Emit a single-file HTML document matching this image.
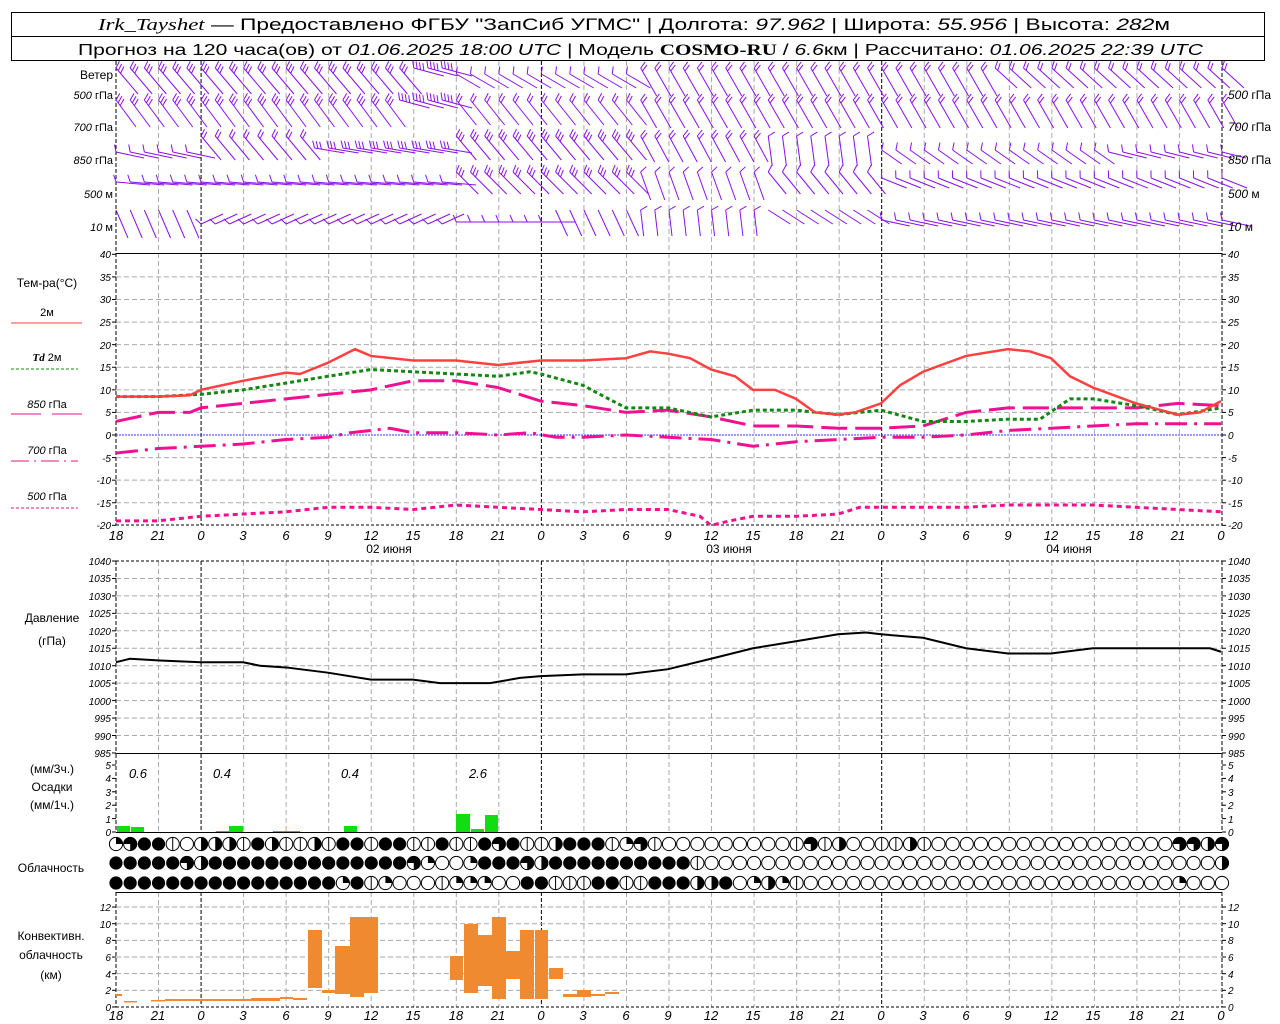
<!DOCTYPE html>
<html><head><meta charset="utf-8"><style>
html,body{margin:0;padding:0;background:#fff;width:1280px;height:1024px;overflow:hidden}
svg{display:block}
text{font-family:"Liberation Sans","DejaVu Sans",sans-serif;fill:#000}
.t{font-size:12px}
.ax{font-size:10px;font-style:italic}
.tk{font-size:13px;font-style:italic}
</style></head><body>
<svg id="s" width="1280" height="1024" xmlns="http://www.w3.org/2000/svg">
<rect x="11.5" y="12.5" width="1253" height="48" fill="#fff" stroke="#000"/>
<line x1="11" y1="36.5" x2="1265" y2="36.5" stroke="#000"/>
<text x="98" y="30" font-size="17" textLength="1072" lengthAdjust="spacingAndGlyphs"><tspan font-family="Liberation Serif" font-style="italic">Irk_Tayshet</tspan> — Предоставлено ФГБУ "ЗапСиб УГМС" | Долгота: <tspan font-style="italic">97.962</tspan> | Широта: <tspan font-style="italic">55.956</tspan> | Высота: <tspan font-style="italic">282</tspan>м</text>
<text x="78" y="55" font-size="16" textLength="1125" lengthAdjust="spacingAndGlyphs">Прогноз на 120 часа(ов) от <tspan font-style="italic">01.06.2025 18:00 UTC</tspan> | Модель <tspan font-family="Liberation Serif" font-weight="bold">COSMO-RU</tspan> / <tspan font-style="italic">6.6</tspan>км | Рассчитано: <tspan font-style="italic">01.06.2025 22:39 UTC</tspan></text>
<g id="g"></g>
<g class="t" text-anchor="end">
<text x="113" y="79">Ветер</text>
<text x="113" y="99" font-size="11"><tspan font-style="italic">500</tspan> гПа</text>
<text x="113" y="131" font-size="11"><tspan font-style="italic">700</tspan> гПа</text>
<text x="113" y="164" font-size="11"><tspan font-style="italic">850</tspan> гПа</text>
<text x="113" y="198" font-size="11"><tspan font-style="italic">500</tspan> м</text>
<text x="113" y="231" font-size="11"><tspan font-style="italic">10</tspan>   м</text>
</g>
<g class="t" font-size="11">
<text x="1228" y="99"><tspan font-style="italic">500</tspan> гПа</text>
<text x="1228" y="131"><tspan font-style="italic">700</tspan> гПа</text>
<text x="1228" y="164"><tspan font-style="italic">850</tspan> гПа</text>
<text x="1228" y="198"><tspan font-style="italic">500</tspan> м</text>
<text x="1228" y="231"><tspan font-style="italic">10</tspan>   м</text>
</g>
<g class="t" text-anchor="middle">
<text x="47" y="287">Тем-ра(°С)</text>
<text x="47" y="316" font-size="11">2м</text>
<text x="47" y="361" font-size="11"><tspan font-family="Liberation Serif" font-weight="bold" font-style="italic">Td</tspan>  2м</text>
<text x="47" y="408" font-size="11"><tspan font-style="italic">850</tspan>  гПа</text>
<text x="47" y="454" font-size="11"><tspan font-style="italic">700</tspan>  гПа</text>
<text x="47" y="500" font-size="11"><tspan font-style="italic">500</tspan>  гПа</text>
<text x="52" y="622">Давление</text>
<text x="52" y="645">(гПа)</text>
<text x="52" y="773">(мм/3ч.)</text>
<text x="52" y="791">Осадки</text>
<text x="52" y="809">(мм/1ч.)</text>
<text x="51" y="872">Облачность</text>
<text x="51" y="940">Конвективн.</text>
<text x="51" y="959">облачность</text>
<text x="51" y="979">(км)</text>
</g>
<line x1="11" y1="323" x2="82" y2="323" stroke="#ff4040" stroke-width="1"/>
<line x1="11" y1="369" x2="78" y2="369" stroke="#118811" stroke-dasharray="3,2"/>
<line x1="11" y1="414" x2="41" y2="414" stroke="#e8108a"/><line x1="52" y1="414" x2="82" y2="414" stroke="#e8108a"/>
<line x1="11" y1="461" x2="78" y2="461" stroke="#e8108a" stroke-dasharray="18,5,2,5"/>
<line x1="11" y1="508" x2="78" y2="508" stroke="#e8108a" stroke-dasharray="3,2"/>
<g class="ax" text-anchor="end">
<text x="111" y="258">40</text><text x="111" y="281">35</text><text x="111" y="303">30</text><text x="111" y="326">25</text><text x="111" y="349">20</text><text x="111" y="371">15</text><text x="111" y="394">10</text><text x="111" y="416">5</text><text x="111" y="439">0</text><text x="111" y="462">-5</text><text x="111" y="484">-10</text><text x="111" y="507">-15</text><text x="111" y="529">-20</text>
<text x="111" y="565">1040</text><text x="111" y="582">1035</text><text x="111" y="600">1030</text><text x="111" y="617">1025</text><text x="111" y="635">1020</text><text x="111" y="652">1015</text><text x="111" y="670">1010</text><text x="111" y="687">1005</text><text x="111" y="705">1000</text><text x="111" y="722">995</text><text x="111" y="740">990</text><text x="111" y="757">985</text>
<text x="111" y="769">5</text><text x="111" y="782">4</text><text x="111" y="796">3</text><text x="111" y="809">2</text><text x="111" y="823">1</text><text x="111" y="836">0</text>
<text x="111" y="911">12</text><text x="111" y="928">10</text><text x="111" y="944">8</text><text x="111" y="961">6</text><text x="111" y="978">4</text><text x="111" y="994">2</text><text x="111" y="1011">0</text>
</g>
<g class="ax">
<text x="1228" y="258">40</text><text x="1228" y="281">35</text><text x="1228" y="303">30</text><text x="1228" y="326">25</text><text x="1228" y="349">20</text><text x="1228" y="371">15</text><text x="1228" y="394">10</text><text x="1228" y="416">5</text><text x="1228" y="439">0</text><text x="1228" y="462">-5</text><text x="1228" y="484">-10</text><text x="1228" y="507">-15</text><text x="1228" y="529">-20</text>
<text x="1228" y="565">1040</text><text x="1228" y="582">1035</text><text x="1228" y="600">1030</text><text x="1228" y="617">1025</text><text x="1228" y="635">1020</text><text x="1228" y="652">1015</text><text x="1228" y="670">1010</text><text x="1228" y="687">1005</text><text x="1228" y="705">1000</text><text x="1228" y="722">995</text><text x="1228" y="740">990</text><text x="1228" y="757">985</text>
<text x="1228" y="769">5</text><text x="1228" y="782">4</text><text x="1228" y="796">3</text><text x="1228" y="809">2</text><text x="1228" y="823">1</text><text x="1228" y="836">0</text>
<text x="1228" y="911">12</text><text x="1228" y="928">10</text><text x="1228" y="944">8</text><text x="1228" y="961">6</text><text x="1228" y="978">4</text><text x="1228" y="994">2</text><text x="1228" y="1011">0</text>
</g>
<g class="tk" text-anchor="middle">
<text x="116" y="540">18</text><text x="158" y="540">21</text><text x="201" y="540">0</text><text x="243" y="540">3</text><text x="286" y="540">6</text><text x="328" y="540">9</text><text x="371" y="540">12</text><text x="413" y="540">15</text><text x="456" y="540">18</text><text x="498" y="540">21</text><text x="541" y="540">0</text><text x="583" y="540">3</text><text x="626" y="540">6</text><text x="668" y="540">9</text><text x="711" y="540">12</text><text x="753" y="540">15</text><text x="796" y="540">18</text><text x="838" y="540">21</text><text x="881" y="540">0</text><text x="923" y="540">3</text><text x="966" y="540">6</text><text x="1008" y="540">9</text><text x="1051" y="540">12</text><text x="1093" y="540">15</text><text x="1136" y="540">18</text><text x="1178" y="540">21</text><text x="1221" y="540">0</text>
<text x="116" y="1020">18</text><text x="158" y="1020">21</text><text x="201" y="1020">0</text><text x="243" y="1020">3</text><text x="286" y="1020">6</text><text x="328" y="1020">9</text><text x="371" y="1020">12</text><text x="413" y="1020">15</text><text x="456" y="1020">18</text><text x="498" y="1020">21</text><text x="541" y="1020">0</text><text x="583" y="1020">3</text><text x="626" y="1020">6</text><text x="668" y="1020">9</text><text x="711" y="1020">12</text><text x="753" y="1020">15</text><text x="796" y="1020">18</text><text x="838" y="1020">21</text><text x="881" y="1020">0</text><text x="923" y="1020">3</text><text x="966" y="1020">6</text><text x="1008" y="1020">9</text><text x="1051" y="1020">12</text><text x="1093" y="1020">15</text><text x="1136" y="1020">18</text><text x="1178" y="1020">21</text><text x="1221" y="1020">0</text>
</g>
<g class="t" text-anchor="middle" font-size="12">
<text x="389" y="553">02 июня</text><text x="729" y="553">03 июня</text><text x="1069" y="553">04 июня</text>
</g>
<g class="tk" text-anchor="middle">
<text x="138" y="778">0.6</text><text x="222" y="778">0.4</text><text x="350" y="778">0.4</text><text x="478" y="778">2.6</text>
</g>
</svg>
<script>
(function(){
var g=document.getElementById("g"),h="";
function X(i){return 116+i*1106/78;}
function L(x1,y1,x2,y2,st){h+='<line x1="'+x1+'" y1="'+y1+'" x2="'+x2+'" y2="'+y2+'" '+st+'/>';}
function R(x,y,w,hh,f){h+='<rect x="'+x+'" y="'+y+'" width="'+w+'" height="'+hh+'" fill="'+f+'"/>';}
var gd='stroke="#aaa" stroke-dasharray="5,3"';
var segs=[[61,253],[253,525],[561,754],[754,832],[892,1007]];
for(var k=0;k<=26;k++){var x=116+k*1106/26;var mid=(k%8==2)||k==0||k==26;
 segs.forEach(function(s){L(x,s[0],x,s[1],mid?'stroke="#000" stroke-dasharray="4,2"':gd);});}
for(var t=35;t>-20;t-=5){if(t==0)continue;var y=435-t*4.517;L(116,y,1222,y,gd);}
L(116,435,1222,435,'stroke="#33f" stroke-dasharray="2,1"');
L(116,525,1222,525,'stroke="#000" stroke-dasharray="3,2"');
for(var p=1;p<11;p++){var y=561+p*17.45;L(116,y,1222,y,gd);}
L(116,561,1222,561,'stroke="#000" stroke-dasharray="3,2"');
for(var c=2;c<=12;c+=2){var y=1007-c*8.33;L(116,y,1222,y,gd);}
L(116,1007,1222,1007,'stroke="#000" stroke-dasharray="3,2"');
L(116,253.5,1222,253.5,'stroke="#000"');L(116,753.5,1222,753.5,'stroke="#000"');
L(116,832.5,1222,832.5,'stroke="#000"');L(116,892.5,1222,892.5,'stroke="#000"');
function ticks(y){L(112,y,116,y,'stroke="#000"');L(1222,y,1226,y,'stroke="#000"');}
for(var t=40;t>=-20;t-=5)ticks(435-t*4.517);
for(var p=0;p<12;p++)ticks(561+p*17.45);
for(var v=0;v<=5;v++)ticks(832-v*13.4);
for(var c=0;c<=12;c+=2)ticks(1007-c*8.33);
function poly(d,f,st){var s="";for(var i=0;i<d.length;i+=2)s+=d[i]+","+f(d[i+1])+" ";h+='<polyline points="'+s+'" fill="none" '+st+'/>';}
var ty=function(v){return 435-v*4.517;};
poly([116,-19,158,-19,201,-18,243,-17.5,286,-17,328,-16,371,-16,413,-16.5,456,-15.5,498,-16,541,-16.5,583,-17,626,-16.5,668,-16.5,700,-18,711,-20,730,-19,753,-18,796,-18,838,-17.5,860,-16,881,-16,923,-16,966,-16,1008,-15.5,1051,-15.5,1093,-15.5,1136,-16,1178,-16.5,1221,-17],ty,'stroke="#f01090" stroke-width="3" stroke-dasharray="5,4"');
poly([116,-4,158,-3,201,-2.5,243,-2,286,-1,328,-0.5,350,0.5,371,1,390,1.5,413,0.5,456,0.5,498,0,530,0.5,556,-0.5,583,-0.5,626,0,668,-0.5,711,-1,753,-2.5,796,-1.5,838,-1,881,-0.5,923,-0.5,966,0,1008,1,1051,1.5,1093,2,1136,2.5,1178,2.5,1221,2.5],ty,'stroke="#f01090" stroke-width="3" stroke-dasharray="22,7,3,7"');
poly([116,3,158,5,190,5,201,6,243,7,286,8,328,9,371,10,413,12,456,12,498,10.5,541,7.5,583,6.5,626,5,668,5.5,711,4,753,2,796,2,838,1.5,881,1.5,923,2,966,5,1008,6,1051,6,1093,6,1136,6,1178,7,1221,6.5],ty,'stroke="#f01090" stroke-width="3" stroke-dasharray="26,8"');
poly([116,8.5,158,8.5,201,9,243,10,286,11.5,328,13,371,14.5,413,14,456,13.5,498,13,530,14,541,13.5,583,11,600,9,626,6,668,6,711,4,753,5.5,796,5.5,838,4.5,881,5.5,923,3,966,3,1008,3.5,1040,3.5,1070,8,1093,8,1136,6.5,1178,4.5,1221,6],ty,'stroke="#118811" stroke-width="3" stroke-dasharray="4,3"');
poly([116,8.5,158,8.5,190,8.8,201,10,243,12,286,13.8,300,13.5,328,16,355,19,371,17.5,413,16.5,456,16.5,498,15.5,541,16.5,583,16.5,626,17,650,18.5,668,18,690,17,711,14.5,735,13,753,10,775,10,796,8,815,5,838,4.5,855,5,881,7,900,11,923,14,966,17.5,1008,19,1030,18.5,1051,17,1070,13,1093,10.5,1136,7,1178,4.5,1200,5,1221,7.5],ty,'stroke="#ff4040" stroke-width="2.5"');
poly([116,1011,130,1012,160,1011.5,201,1011,243,1011,260,1010,286,1009.5,328,1008,371,1006,413,1006,440,1005,456,1005,490,1005,520,1006.5,541,1007,583,1007.5,626,1007.5,668,1009,711,1012,753,1015,796,1017,838,1019,866,1019.5,881,1019,923,1018,966,1015,1008,1013.5,1051,1013.5,1093,1015,1136,1015,1178,1015,1210,1015,1221,1014],function(p){return 561+(1040-p)*3.49;},'stroke="#000" stroke-width="2"');
[[117,826,13],[131,827,13],[216,831,13],[229,826,14],[273,831,27],[344,826,13],[456,814,14],[471,829,13],[485,815,13]].forEach(function(b){R(b[0],b[1],b[2],832-b[1],"#11dd11");});
var O="#f08a30";
[[308,930,14,58],[322,990,13,3],[335,946,15,48],[350,917,14,80],[364,917,14,76],[450,956,13,24],[464,924,14,69],[478,935,14,51],[492,917,14,82],[506,951,14,28],[520,930,14,69],[535,930,13,69],[549,968,14,11],[563,994,14,3],[577,990,14,7],[591,994,14,2],[605,992,14,2],[116,994,6,2],[124,1001,13,1.5],[151,1000,14,1.5],[165,999,86,2],[251,998,29,3],[280,997,13,2],[293,998,14,2]].forEach(function(b){R(b[0],b[1],b[2],b[3],O);});
function rep(c,n){return new Array(n+1).join(c);}
var rows=["QTBBVWHHHVBHVVHVBBVBBVVBVVBTBVVHBB"+"BVQTV"+rep("W",9)+"VTVHWWVVHV"+rep("W",17)+"TTHT",
rep("B",5)+"TH"+rep("B",14)+"TQWWQBBBTH"+rep("B",10)+"V"+rep("W",36)+"H",
rep("B",16)+"QBVQ"+"WWW"+"V"+"QQQ"+"WW"+"BBVVVBBVVBBBHHBWQHQV"+rep("W",26)+"Q"+"WWW"];
var cy=[844,863,883];
rows.forEach(function(r,ri){for(var i=0;i<79;i++){var x=X(i),y=cy[ri],c=r[i]||"W",rr=6.6;
 if(c=="B"){h+='<circle cx="'+x+'" cy="'+y+'" r="'+rr+'" fill="#000"/>';continue;}
 h+='<circle cx="'+x+'" cy="'+y+'" r="'+rr+'" fill="#fff" stroke="#000"/>';
 if(c=="V")L(x,y-rr,x,y+rr,'stroke="#000"');
 if(c=="H")h+='<path d="M'+x+','+(y-rr)+'A'+rr+','+rr+' 0 0 1 '+x+','+(y+rr)+'Z" fill="#000"/>';
 if(c=="Q")h+='<path d="M'+x+','+y+'L'+x+','+(y-rr)+'A'+rr+','+rr+' 0 0 1 '+(x+rr)+','+y+'Z" fill="#000"/>';
 if(c=="T")h+='<path d="M'+x+','+y+'L'+(x-rr)+','+y+'A'+rr+','+rr+' 0 1 1 '+x+','+(y+rr)+'Z" fill="#000"/>';
}});
var P='stroke="#8a10e8" stroke-width="1"';
function barb(x0,y0,dx,dy,n){var l=Math.sqrt(dx*dx+dy*dy)||1,ux=dx/l,uy=dy/l;var px=-uy,py=ux;
 if(py>0.01||(Math.abs(py)<=0.01&&px<0)){px=-px;py=-py;}
 L(x0,y0,x0+dx,y0+dy,P);
 for(var k=0;k<n;k++){var sx=x0+ux*k*3.5,sy=y0+uy*k*3.5;L(sx,sy,sx+px*7-ux*3,sy+py*7-uy*3,P);}}
function row(y0,f){for(var i=0;i<79;i++){var r=f(i);barb(X(i),y0+(r[3]||0),r[0],r[1],r[2]);}}
row(68,function(i){return i<21?[22,26,3]:i<24?[30,8,4]:i<37?[24,14,1,6]:i<62?[16,28,2]:[22,20,2];});
row(100,function(i){return i<20?[20,27,3]:i<24?[30,8,4]:i<37?[20,25,2]:[16,28,2];});
row(136,function(i){return i<6?[28,6,1,16]:i<14?[20,24,2]:i<24?[30,5,3,12]:i<37?[20,24,3]:i<46?[14,26,2]:i<54?[4,30,1]:i<70?[20,14,1,14]:[24,6,1,16];});
row(172,function(i){return i<24?[34,3,1,10]:i<37?[22,22,3]:i<46?[10,28,1]:i<54?[18,22,1]:[25,10,1,6];});
row(210,function(i){return i<6?[12,28,0]:i<24?[22,-10,1,14]:i<31?[34,0,1,12]:i<37?[12,26,0]:i<46?[3,26,1]:i<54?[22,14,0]:[28,6,1,10];});
g.innerHTML=h;
})();
</script>
</body></html>
